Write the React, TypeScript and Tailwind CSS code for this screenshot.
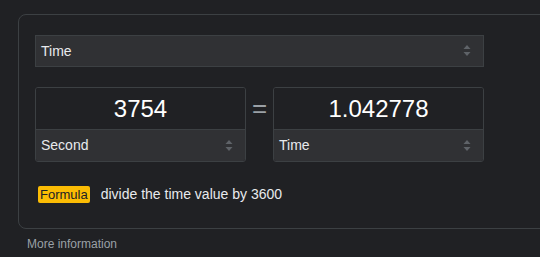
import React from "react";

function Arrows() {
  return (
    <svg width="8" height="14" viewBox="0 0 8 14" className="shrink-0">
      <path d="M4 1 L7.5 5 L0.5 5 Z" fill="#5f6368" />
      <path d="M0.5 8 L7.5 8 L4 12 Z" fill="#5f6368" />
    </svg>
  );
}

function UnitBox({ value, unit }: { value: string; unit: string }) {
  return (
    <div className="w-[211px] h-[75px] rounded-[3px] border border-[#3c4043] flex flex-col overflow-hidden">
      <div className="h-[42px] flex items-center justify-center text-[24px] text-white border-b border-[#3c4043] bg-[#202124]">
        {value}
      </div>
      <div className="flex-1 bg-[#303134] flex items-center justify-between pl-[5px] pr-[12px] text-[14px] text-[#e8eaed]">
        <span>{unit}</span>
        <Arrows />
      </div>
    </div>
  );
}

export default function App() {
  return (
    <div
      className="w-[540px] h-[257px] overflow-hidden bg-[#202124]"
      style={{ fontFamily: '"Liberation Sans", Arial, sans-serif' }}
    >
      <div className="ml-[18px] mt-[14px] w-[560px] h-[215px] border border-[#3c4043] rounded-[8px] pl-[16px] pt-[20px]">
        <div className="w-[449px] h-[32px] bg-[#303134] border border-[#3c4043] flex items-center justify-between pl-[5px] pr-[12px] text-[14px] text-[#e8eaed]">
          <span>Time</span>
          <Arrows />
        </div>
        <div className="mt-[20px] flex items-start">
          <UnitBox value="3754" unit="Second" />
          <div className="w-[27px] h-[42px] flex items-center justify-center text-[#9aa0a6] text-[26px]">=</div>
          <UnitBox value="1.042778" unit="Time" />
        </div>
        <div className="mt-[22px] ml-[3px] flex items-center">
          <span className="h-[17px] px-[2px] bg-[#fbbc04] text-[#202124] text-[13px] leading-[17px] rounded-[2px]">Formula</span>
          <span className="ml-[11px] text-[14px] text-[#e8eaed]">divide the time value by 3600</span>
        </div>
      </div>
      <div className="ml-[27px] mt-[6px] text-[12px] text-[#9aa0a6]">More information</div>
    </div>
  );
}
